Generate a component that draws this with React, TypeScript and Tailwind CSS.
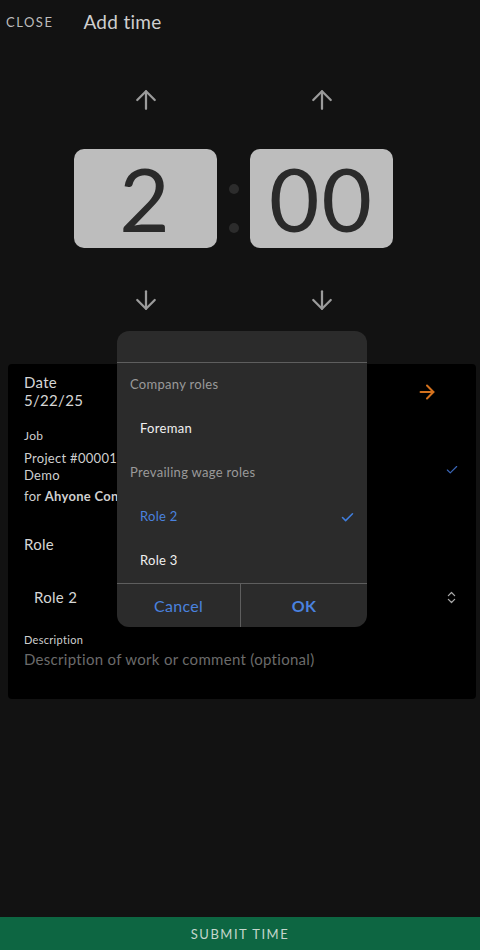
import React from "react";
import { ArrowUp, ArrowDown, ArrowRight, Check, ChevronsUpDown } from "lucide-react";

function Digit({ value }: { value: string }) {
  return (
    <div className="flex flex-col items-center">
      <div className="flex h-[40px] items-center justify-center">
        <ArrowUp size={30} strokeWidth={1.8} color="#9b9b9b" />
      </div>
      <div className="mt-[29px] flex h-[99px] w-[143px] items-center justify-center rounded-[10px] bg-[#bdbdbd]">
        <span
          className="text-[87px] font-normal leading-none tracking-[2px] text-[#2a2a2a]"
          style={{ fontFamily: "Lato, sans-serif" }}
        >
          {value}
        </span>
      </div>
      <div className="mt-[32px] flex h-[40px] items-center justify-center">
        <ArrowDown size={30} strokeWidth={1.8} color="#9b9b9b" />
      </div>
    </div>
  );
}

export default function App() {
  return (
    <div
      className="relative flex min-h-[950px] w-full flex-col bg-[#121212] tracking-[0.3px] text-white"
      style={{ fontFamily: "Lato, 'Open Sans', sans-serif" }}
    >
      <div className="flex h-[45px] items-center">
        <span className="ml-[6px] text-[13px] tracking-[1.5px] text-[#bdbdbd]">CLOSE</span>
        <span className="ml-[30px] text-[19px] text-[#cfcfcf]">Add time</span>
      </div>

      <div className="flex pl-[74px] pt-[35px]">
        <Digit value="2" />
        <div className="flex w-[33px] flex-col items-center pt-[104px]">
          <div className="h-[10px] w-[10px] rounded-full bg-[#2c2c2c]" />
          <div className="mt-[29px] h-[10px] w-[10px] rounded-full bg-[#2c2c2c]" />
        </div>
        <Digit value="00" />
      </div>

      <div className="ml-[8px] mr-[4px] mt-[44px] h-[335px] rounded-[4px] bg-black px-[16px] pt-[9px]">
        <div className="flex items-start justify-between">
          <div className="text-[15px] leading-[18px] text-[#d6d6d6]">
            <div>Date</div>
            <div>5/22/25</div>
          </div>
          <div className="flex items-center">
            <ArrowRight size={22} strokeWidth={2.2} color="#d5721e" className="mr-[46px] mt-[8px]" />
            <ArrowRight size={22} strokeWidth={2.2} color="#d5721e" className="mr-[22px] mt-[8px]" />
          </div>
        </div>
        <div className="mt-[19px] text-[12px] leading-[16px] text-[#cfcfcf]">Job</div>
        <div className="mt-[6px] flex items-start justify-between">
          <div className="text-[13px] text-[#cfcfcf]">
            <div className="leading-[17px]">Project #00001 Construction</div>
            <div className="leading-[17px]">Demo</div>
            <div className="mt-[4px] leading-[16px]">
              for <span className="font-bold">Ahyone Construction</span>
            </div>
          </div>
          <Check size={14} strokeWidth={2} color="#3a66b8" className="mr-[1px] mt-[13px]" />
        </div>
        <div className="mt-[31px] text-[15px] leading-[18px] text-[#d6d6d6]">Role</div>
        <div className="mt-[35px] flex items-center justify-between pl-[10px]">
          <span className="text-[15px] leading-[18px] text-[#d6d6d6]">Role 2</span>
          <ChevronsUpDown size={15} strokeWidth={2} color="#a8a8a8" className="mr-[1px]" />
        </div>
        <div className="mt-[27px] text-[11px] leading-[14px] text-[#cfcfcf]">Description</div>
        <div className="mt-[3px] text-[15px] leading-[18px] text-[#6b6b6b]">
          Description of work or comment (optional)
        </div>
      </div>

      <div className="flex-1" />

      <div className="flex h-[33px] items-center justify-center bg-[#0d6642] pt-[2px]">
        <span className="text-[13px] tracking-[1.5px] text-[#c4d6cc]">SUBMIT TIME</span>
      </div>

      <div className="absolute left-[117px] top-[331px] w-[250px] overflow-hidden rounded-[12px] bg-[#2b2b2b]">
        <div className="h-[32px] border-b border-[#5e5e5e]" />
        <div className="flex h-[44px] items-center pl-[13px] text-[13px] text-[#9a9a9a]">Company roles</div>
        <div className="flex h-[44px] items-center pl-[23px] text-[13px] text-[#f0f0f0]">Foreman</div>
        <div className="flex h-[44px] items-center pl-[13px] text-[13px] text-[#9a9a9a]">Prevailing wage roles</div>
        <div className="flex h-[44px] items-center justify-between pl-[23px] pr-[12px] text-[13px] text-[#4a82df]">
          <span>Role 2</span>
          <Check size={15} strokeWidth={2.5} color="#3f7ddc" />
        </div>
        <div className="flex h-[44px] items-center pl-[23px] text-[13px] text-[#f0f0f0]">Role 3</div>
        <div className="flex h-[44px] border-t border-[#5e5e5e]">
          <div className="flex w-[124px] items-center justify-center border-r border-[#5e5e5e] text-[16px] text-[#4a82df]">
            Cancel
          </div>
          <div className="flex flex-1 items-center justify-center text-[16px] font-bold text-[#4a82df]">OK</div>
        </div>
      </div>
    </div>
  );
}
